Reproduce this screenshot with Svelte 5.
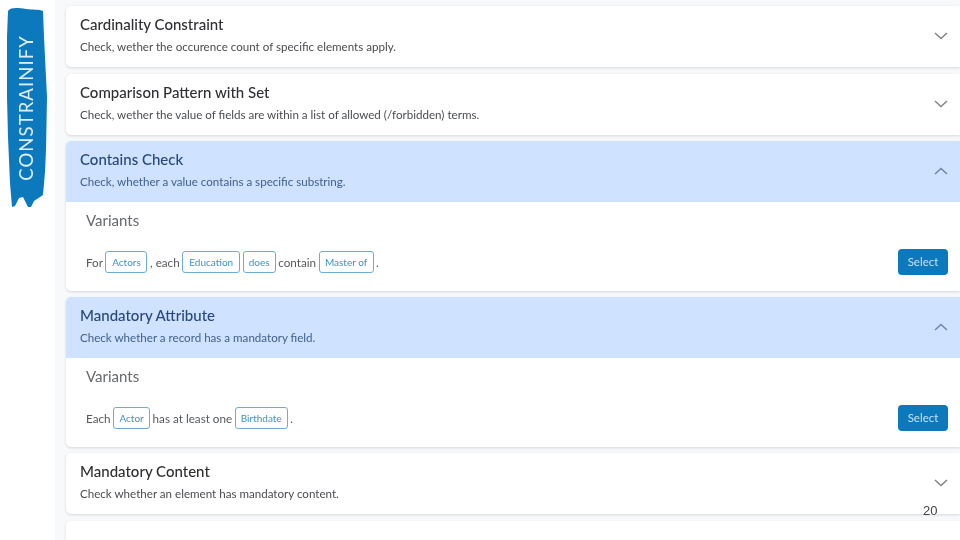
<script>
  const items = [
    { title: 'Cardinality Constraint', desc: 'Check, wether the occurence count of specific elements apply.' },
    { title: 'Comparison Pattern with Set', desc: 'Check, wether the value of fields are within a list of allowed (/forbidden) terms.' },
    {
      title: 'Contains Check', desc: 'Check, whether a value contains a specific substring.', open: true,
      variant: [['t', 'For'], ['c', 'Actors', 42], ['t', ', each'], ['c', 'Education', 58], ['c', 'does', 33], ['t', 'contain'], ['c', 'Master of', 55], ['t', '.']]
    },
    {
      title: 'Mandatory Attribute', desc: 'Check whether a record has a mandatory field.', open: true,
      variant: [['t', 'Each'], ['c', 'Actor', 37], ['t', 'has at least one'], ['c', 'Birthdate', 53], ['t', '.']]
    },
    { title: 'Mandatory Content', desc: 'Check whether an element has mandatory content.' }
  ];
</script>

<div class="page">
  <aside class="side">
    <div class="brush">
      <svg width="42" height="202" viewBox="0 0 42 202">
        <path fill="#0b79bc" d="M2 4 C5 0 12 1 20 2 C27 3 33 2 37 4 L38 30 L41 90 L40 143 L39 165 L37 188 L28 194 L25 200 L22 200 L17 190 L13 191 L9 199 L6 200 L4 176 L2 130 L1 90 L1 30 Z" />
      </svg>
      <span class="brand">CONSTRAINIFY</span>
    </div>
  </aside>

  <main class="list">
    {#each items as item}
      <section class="card">
        <header class="head" class:open={item.open}>
          <div>
            <h2>{item.title}</h2>
            <p>{item.desc}</p>
          </div>
          <svg class="chev" width="14" height="8" viewBox="0 0 14 8">
            <path d={item.open ? 'M1 7 L7 1.5 L13 7' : 'M1 1 L7 6.5 L13 1'} />
          </svg>
        </header>
        {#if item.open}
          <div class="body">
            <h3>Variants</h3>
            <div class="row">
              <div class="sentence">
                {#each item.variant as [kind, text, w]}
                  {#if kind === 'c'}
                    <span class="chip" style="width: {w}px">{text}</span>
                  {:else}
                    <span>{text}</span>
                  {/if}
                {/each}
              </div>
              <button>Select</button>
            </div>
          </div>
        {/if}
      </section>
    {/each}
    <section class="card stub"></section>
  </main>

  <span class="pageno">20</span>
</div>

<style>
  :global(body) {
    margin: 0;
    background: #fff;
  }
  .page {
    width: 960px;
    height: 540px;
    display: flex;
    overflow: hidden;
    position: relative;
    font-family: "Lato", "Liberation Sans", sans-serif;
    filter: blur(0.35px);
  }
  .side {
    width: 55px;
    flex: none;
    padding: 7px 0 0 6px;
    box-sizing: border-box;
    background: #fff;
  }
  .brush {
    position: relative;
    width: 42px;
    height: 202px;
  }
  .brand {
    position: absolute;
    left: 11px;
    top: 28px;
    writing-mode: vertical-rl;
    transform: rotate(180deg);
    color: #dcedf8;
    font-size: 18.5px;
    letter-spacing: 1.1px;
    line-height: 18px;
  }
  .list {
    flex: 1;
    min-width: 0;
    background: #f8f9fa;
    padding: 6px 0 0 11px;
    display: flex;
    flex-direction: column;
    gap: 6.5px;
  }
  .card {
    background: #fff;
    border-radius: 5px 0 0 5px;
    box-shadow: 0 1px 3px rgba(0, 0, 0, 0.14);
    flex: none;
    overflow: hidden;
  }
  .stub {
    height: 40px;
  }
  .head {
    height: 61px;
    box-sizing: border-box;
    padding: 9px 12px 0 14px;
    display: flex;
    justify-content: space-between;
    align-items: flex-start;
  }
  .head.open {
    background: #cfe2ff;
  }
  .head.open h2 {
    color: #27477d;
  }
  .head.open p {
    color: #41608e;
  }
  .head.open .chev path {
    stroke: #6d86ad;
  }
  h2 {
    margin: 0;
    font-size: 15px;
    line-height: 18px;
    font-weight: 500;
    color: #2f2f33;
  }
  p {
    margin: 6px 0 0;
    font-size: 11.6px;
    line-height: 16px;
    color: #4a4c50;
  }
  .chev {
    margin-top: 17px;
  }
  .chev path {
    fill: none;
    stroke: #808488;
    stroke-width: 1.5;
  }
  .body {
    height: 88.5px;
    box-sizing: border-box;
    padding: 8.5px 12px 0 20px;
  }
  h3 {
    margin: 0;
    font-size: 15px;
    line-height: 18px;
    font-weight: 400;
    color: #66696d;
  }
  .row {
    margin-top: 20px;
    display: flex;
    justify-content: space-between;
    align-items: center;
  }
  .sentence {
    display: flex;
    align-items: center;
    gap: 2.5px;
    font-size: 11.7px;
    color: #55585c;
  }
  .chip {
    box-sizing: border-box;
    border: 1px solid #6aaed6;
    border-radius: 3px;
    height: 22px;
    line-height: 20px;
    font-size: 10px;
    text-align: center;
    color: #3d93c4;
  }
  button {
    width: 50px;
    height: 26px;
    padding: 0;
    border: 0;
    border-radius: 4px;
    background: #0b79bc;
    color: #c6e0f1;
    font: 11.5px "Lato", "Liberation Sans", sans-serif;
  }
  .pageno {
    position: absolute;
    left: 923px;
    top: 503px;
    font: 13px "Liberation Sans", sans-serif;
    color: #444;
  }
</style>
